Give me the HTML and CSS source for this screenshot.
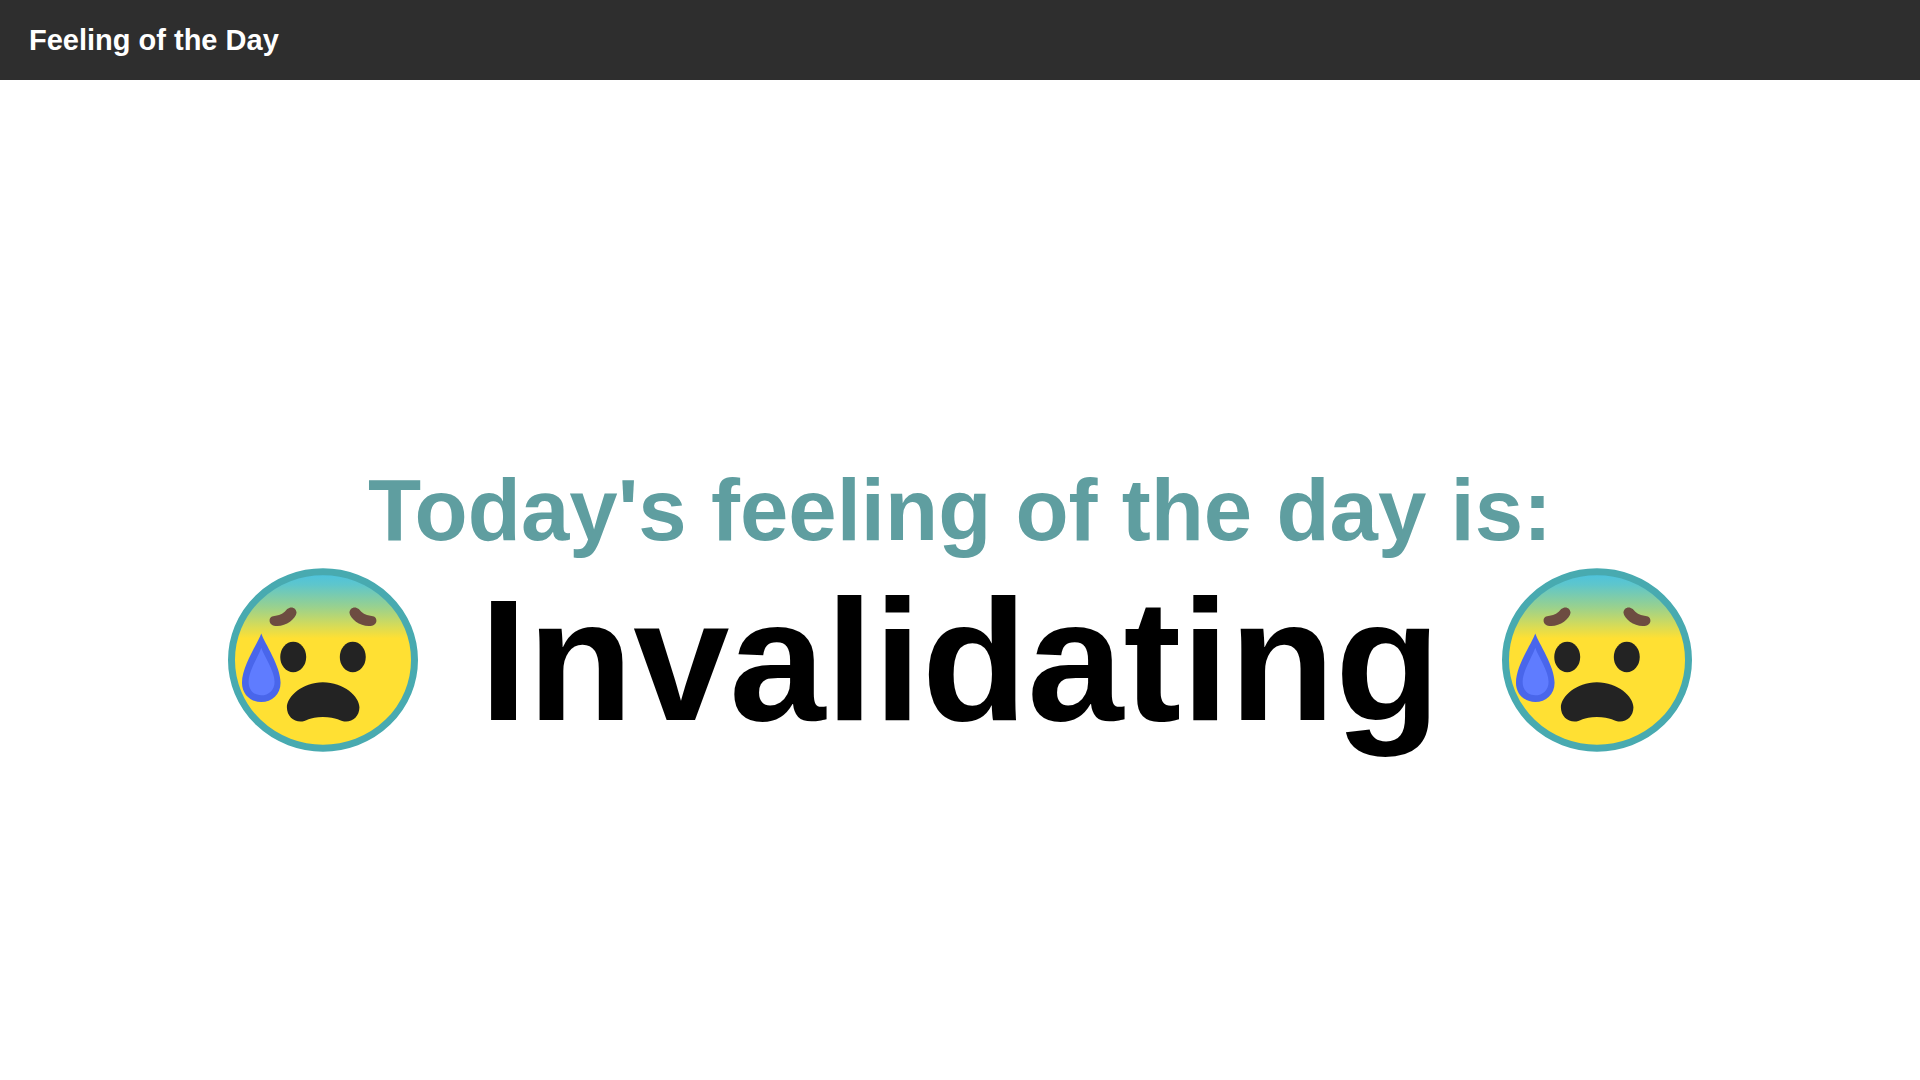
FILE: index.html
```html
<!DOCTYPE html>
<html lang="en">
<head>
<meta charset="utf-8">
<meta name="viewport" content="width=device-width, initial-scale=1">
<title>Feeling of the Day</title>
<link rel="stylesheet" href="styles.css">
</head>
<body>
<header class="topbar"><h1 class="brand">Feeling of the Day</h1></header>
<main class="content">
  <h2 class="intro">Today's feeling of the day is:</h2>
  <p class="feeling">
    <svg class="face" viewBox="53 57 571 552" role="img" aria-label="Anxious face with sweat">
      <defs>
        <linearGradient id="chill" gradientUnits="userSpaceOnUse" x1="0" y1="78" x2="0" y2="268">
          <stop offset="0" stop-color="#4fc3dc"/>
          <stop offset="0.15" stop-color="#5ec6cc"/>
          <stop offset="0.5" stop-color="#98d18f"/>
          <stop offset="0.8" stop-color="#d6db58"/>
          <stop offset="1" stop-color="#ffe033"/>
        </linearGradient>
        <g id="anxious">
          <ellipse cx="338.5" cy="333" rx="275" ry="265" fill="url(#chill)" stroke="#48aab0" stroke-width="21"/>
          <path d="M178 215C178 205 185 201 196 200C211 199 221 192 231 180C243 169 259 177 259 191C257 209 228 231 201 231C186 231 178 224 178 215ZM499 215C499 205 492 201 481 200C466 199 456 192 446 180C434 169 418 177 418 191C420 209 449 231 476 231C491 231 499 224 499 215Z" fill="#6d4c41"/>
          <ellipse cx="249" cy="324" rx="39" ry="46" fill="#232323"/>
          <ellipse cx="428" cy="324" rx="39" ry="46" fill="#232323"/>
          <path d="M338 400C402 400 448 444 448 475C448 501 429 518 408 518C392 518 380 504 338 504C297 504 287 518 271 518C249 518 230 501 230 475C230 444 276 400 338 400Z" fill="#232323"/>
          <path d="M153 253C164 284 211 350 211 401C211 436 185 459 153 459C121 459 95 436 95 401C95 350 142 284 153 253Z" fill="#4966eb"/>
          <path d="M153 296C161 321 193 366 193 398C193 423 175 439 153 439C131 439 115 423 115 398C115 366 145 321 153 296Z" fill="#5f7cff"/>
        </g>
      </defs>
      <use href="#anxious"/>
    </svg>
    <span>Invalidating</span>
    <svg class="face" viewBox="53 57 571 552" role="img" aria-label="Anxious face with sweat">
      <use href="#anxious"/>
    </svg>
  </p>
</main>
</body>
</html>
```

FILE: styles.css
```css
body {
  margin: 0;
  min-height: 100vh;
  display: flex;
  flex-direction: column;
  background: #fff;
  font-family: "Liberation Sans", Arial, sans-serif;
}
.topbar {
  display: flex;
  align-items: center;
  height: 80px;
  padding: 0 29px;
  background: #2e2e2e;
  color: #fff;
}
.brand {
  margin: 0;
  font-size: 29px;
}
.content {
  flex: 1;
  display: flex;
  flex-direction: column;
  align-items: center;
  justify-content: center;
  padding-top: 60px;
  text-align: center;
}
.intro {
  margin: 0;
  font-size: 87px;
  line-height: 100px;
  color: #5f9ea0;
}
.feeling {
  display: flex;
  align-items: center;
  gap: 61px;
  margin: 0;
  font-size: 173px;
  font-weight: bold;
  color: #000;
}
.face {
  flex: none;
  width: 190px;
  height: 184px;
}
```
